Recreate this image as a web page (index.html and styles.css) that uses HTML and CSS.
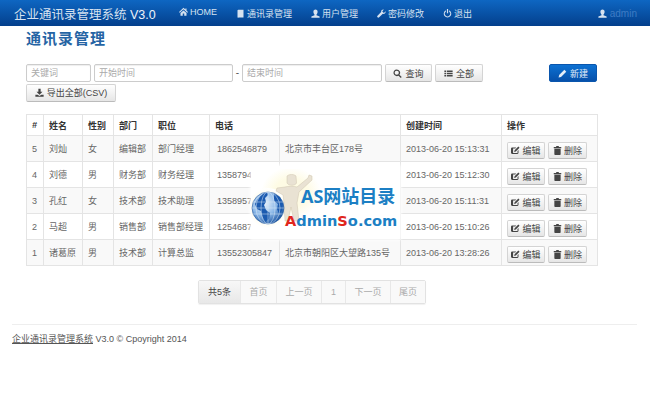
FILE: index.html
```html
<!DOCTYPE html>
<html lang="zh-CN">
<head>
    <meta charset="UTF-8">
    <meta name="viewport" content="width=device-width, initial-scale=1.0">
    <title>企业通讯录管理系统 V3.0</title>
    <link rel="stylesheet" href="styles.css">
</head>
<body>
    <svg class="defs" width="0" height="0">
        <symbol id="i-home" viewBox="0 0 12 12"><path d="M6 1 0 6.500l1 1L6 3l5 4.500 1-1-2-1.900V2H8.500v1.200zM2 8l4-3.500L10 8v3.500H7V8.500H5v3H2z"/></symbol>
        <symbol id="i-book" viewBox="0 0 12 12"><path d="M2 1.500 3 1h7v9.500H3.500l-.5.500h7v.500H2.500L2 11z"/></symbol>
        <symbol id="i-user" viewBox="0 0 12 12"><path d="M6 .5c1.800 0 2.800 1.300 2.800 3S7.800 7 7.300 7.300v1L11.500 10v1.500H.5V10l4.200-1.700v-1C4.200 7 3.200 5.200 3.200 3.500s1-3 2.800-3z"/></symbol>
        <symbol id="i-wrench" viewBox="0 0 12 12"><path d="M11.500 3 9.200 5.200 7 3.300 9.100.8C7.500.2 5.200 1.500 5.500 4L.7 9a1.500 1.500 0 0 0 2.200 2.100L7.800 6.400C10 7 12 5 11.500 3z"/></symbol>
        <symbol id="i-off" viewBox="0 0 12 12"><path d="M3.800 1.800v1.700a3.500 3.500 0 1 0 4.400 0V1.800a5 5 0 1 1-4.400 0zM5.200 0h1.600v5.500H5.200z"/></symbol>
        <symbol id="i-search" viewBox="0 0 12 12"><path fill-rule="evenodd" d="M5 .5a4.500 4.500 0 0 1 3.600 7.200l3 3-1.200 1.200-3-3A4.500 4.500 0 1 1 5 .5zm0 1.700a2.800 2.800 0 1 0 0 5.600 2.800 2.800 0 0 0 0-5.600z"/></symbol>
        <symbol id="i-list" viewBox="0 0 12 12"><path d="M.5 2h2.500v2H.5zm3.500 0h7.500v2H4zM.5 5h2.500v2H.5zM4 5h7.500v2H4zM.5 8h2.500v2H.5zM4 8h7.500v2H4z"/></symbol>
        <symbol id="i-pencil" viewBox="0 0 12 12"><path d="M8.500 1 11 3.500 4 10.500 .8 11.300 1.500 8z"/></symbol>
        <symbol id="i-export" viewBox="0 0 12 12"><path d="M4.500 1h3v4H10L6 9 2 5h2.500zM.5 9h3L6 10.500 8.500 9h3v2.500H.5z"/></symbol>
        <symbol id="i-edit" viewBox="0 0 12 12"><path d="M1.500 2H7L5.700 3.300H2.800v5.900h5.900V6.500L10 5.200V9a1.500 1.500 0 0 1-1.500 1.500h-7A1.500 1.500 0 0 1 0 9V3.500A1.500 1.500 0 0 1 1.500 2zM9.800.8l1.600 1.600-5 5-2.200.6.600-2.200z"/></symbol>
        <symbol id="i-trash" viewBox="0 0 12 12"><path d="M4.500 0h3l.5 1.200h3V3H1V1.200h3zM1.800 3.800h8.400V11a1 1 0 0 1-1 1H2.800a1 1 0 0 1-1-1z"/></symbol>
    </svg>

    <header class="navbar">
        <span class="brand">企业通讯录管理系统 <b>V3.0</b></span>
        <nav class="nav">
            <a href="#"><svg class="icon"><use href="#i-home"/></svg>HOME</a>
            <a href="#"><svg class="icon"><use href="#i-book"/></svg>通讯录管理</a>
            <a href="#"><svg class="icon"><use href="#i-user"/></svg>用户管理</a>
            <a href="#"><svg class="icon"><use href="#i-wrench"/></svg>密码修改</a>
            <a href="#"><svg class="icon"><use href="#i-off"/></svg>退出</a>
        </nav>
        <span class="account"><svg class="icon"><use href="#i-user"/></svg><a href="#">admin</a></span>
    </header>

    <main class="content">
        <h1 class="page-title">通讯录管理</h1>

        <form class="search">
            <input type="text" class="field field-key" placeholder="关键词">
            <input type="text" class="field field-date" placeholder="开始时间">
            <span class="dash">-</span>
            <input type="text" class="field field-date" placeholder="结束时间">
            <button type="button" class="btn btn-query"><svg class="icon"><use href="#i-search"/></svg>查询</button>
            <button type="button" class="btn btn-all"><svg class="icon"><use href="#i-list"/></svg>全部</button>
            <button type="button" class="btn btn-primary"><svg class="icon"><use href="#i-pencil"/></svg>新建</button>
            <button type="button" class="btn btn-export"><svg class="icon"><use href="#i-export"/></svg>导出全部(CSV)</button>
        </form>

        <table class="contacts">
            <colgroup>
                <col class="c-id"><col class="c-name"><col class="c-sex"><col class="c-dept"><col class="c-job">
                <col class="c-tel"><col class="c-addr"><col class="c-time"><col class="c-ops">
            </colgroup>
            <thead>
                <tr><th class="num">#</th><th>姓名</th><th>性别</th><th>部门</th><th>职位</th><th>电话</th><th></th><th>创建时间</th><th>操作</th></tr>
            </thead>
            <tbody>
                <tr>
                    <td>5</td><td>刘灿</td><td>女</td><td>编辑部</td><td>部门经理</td><td class="tel">1862546879</td><td>北京市丰台区178号</td><td>2013-06-20 15:13:31</td>
                    <td class="ops"><button type="button" class="btn btn-mini"><svg class="icon"><use href="#i-edit"/></svg>编辑</button><button type="button" class="btn btn-mini"><svg class="icon"><use href="#i-trash"/></svg>删除</button></td>
                </tr>
                <tr>
                    <td>4</td><td>刘德</td><td>男</td><td>财务部</td><td>财务经理</td><td class="tel">13587945</td><td></td><td>2013-06-20 15:12:30</td>
                    <td class="ops"><button type="button" class="btn btn-mini"><svg class="icon"><use href="#i-edit"/></svg>编辑</button><button type="button" class="btn btn-mini"><svg class="icon"><use href="#i-trash"/></svg>删除</button></td>
                </tr>
                <tr>
                    <td>3</td><td>孔红</td><td>女</td><td>技术部</td><td>技术助理</td><td class="tel">13589576</td><td></td><td>2013-06-20 15:11:31</td>
                    <td class="ops"><button type="button" class="btn btn-mini"><svg class="icon"><use href="#i-edit"/></svg>编辑</button><button type="button" class="btn btn-mini"><svg class="icon"><use href="#i-trash"/></svg>删除</button></td>
                </tr>
                <tr>
                    <td>2</td><td>马超</td><td>男</td><td>销售部</td><td>销售部经理</td><td class="tel">12546873</td><td></td><td>2013-06-20 15:10:26</td>
                    <td class="ops"><button type="button" class="btn btn-mini"><svg class="icon"><use href="#i-edit"/></svg>编辑</button><button type="button" class="btn btn-mini"><svg class="icon"><use href="#i-trash"/></svg>删除</button></td>
                </tr>
                <tr>
                    <td>1</td><td>诸葛原</td><td>男</td><td>技术部</td><td>计算总监</td><td class="tel">13552305847</td><td>北京市朝阳区大望路135号</td><td>2013-06-20 13:28:26</td>
                    <td class="ops"><button type="button" class="btn btn-mini"><svg class="icon"><use href="#i-edit"/></svg>编辑</button><button type="button" class="btn btn-mini"><svg class="icon"><use href="#i-trash"/></svg>删除</button></td>
                </tr>
            </tbody>
        </table>

        <div class="pager">
            <span class="total">共5条</span>
            <a href="#" class="p-first">首页</a>
            <a href="#" class="p-prev">上一页</a>
            <a href="#" class="p-cur">1</a>
            <a href="#" class="p-next">下一页</a>
            <a href="#" class="p-last">尾页</a>
        </div>
    </main>

    <footer class="footer">
        <span><a href="#">企业通讯录管理系统</a> V3.0 © Cpoyright 2014</span>
    </footer>

    <!-- site stamp that sits over the table -->
    <div class="stamp">
        <svg class="stamp-art" width="90" height="70" viewBox="0 0 90 70">
            <defs>
                <radialGradient id="ocean" cx="38%" cy="35%" r="70%">
                    <stop offset="0" stop-color="#eef5fc"/>
                    <stop offset=".55" stop-color="#8db9e8"/>
                    <stop offset="1" stop-color="#15509f"/>
                </radialGradient>
                <radialGradient id="halo">
                    <stop offset=".55" stop-color="#fefbe4"/>
                    <stop offset="1" stop-color="#fff"/>
                </radialGradient>
            </defs>
            <ellipse cx="40" cy="24" rx="30" ry="26" fill="url(#halo)"/>
            <circle cx="17" cy="39" r="20" fill="url(#halo)"/>
            <!-- the little man -->
            <g fill="#e9e2d3" stroke="#cfc5ae" stroke-width=".5">
                <path d="M36 7c2-2 7-2 9 0l.5 7c-1 3-8 3-9.500 0z"/>
                <path d="M34 18c3-1 9-1 12 0l11-9 1-3 3 1 0 4-13 12-2 11 2 18h-5l-3-14-3 14h-3l-1-18-1-8-7-4 1-3z"/>
            </g>
            <!-- globe -->
            <circle cx="17" cy="39" r="16" fill="url(#ocean)" stroke="#2a5d9f" stroke-width=".6"/>
            <g fill="#1b5bb0">
                <path d="M4 35c2-5 7-11 12-12l1 3-3 3 1 4-2 3 2 5 4 3-1 6-4 3-3-6-1-5-4-2z"/>
                <path d="M23 25l6 3 3 7-1 7-3 3-2-5 1-5-4-3z"/>
            </g>
            <g fill="none" stroke="#dbe8f6" stroke-width=".5">
                <ellipse cx="17" cy="39" rx="7" ry="16"/>
                <ellipse cx="17" cy="39" rx="12" ry="16"/>
                <path d="M17 23v32M2 33h30M1 39h32M2 45h30"/>
            </g>
        </svg>
        <div class="stamp-cn">AS网站目录</div>
        <div class="stamp-en"><em>A</em>dmin<em>S</em>o.com</div>
    </div>
</body>
</html>
```

FILE: styles.css
```css
* {
    box-sizing: border-box;
}
html, body {
    height: 100%;
}
body {
    position: relative;
    margin: 0;
    overflow: hidden;
    background: #fff;
    color: #555;
    font-family: "Liberation Sans", "Noto Sans CJK SC", sans-serif;
    font-size: 9px;
}
a {
    color: inherit;
    text-decoration: none;
}
.defs {
    position: absolute;
}
.icon {
    width: 9px;
    height: 9px;
    margin-right: 3px;
    fill: currentColor;
    vertical-align: -1px;
}

/* top bar */
.navbar {
    display: flex;
    align-items: center;
    height: 26px;
    padding-left: 14px;
    background: linear-gradient(#0e66c2, #033f8c);
    color: #d6e2f0;
}
.brand {
    width: 165px;
    font-size: 12.500px;
    white-space: nowrap;
}
.brand b {
    color: #eef3f9;
    font-weight: normal;
}
.nav {
    display: flex;
}
.nav a {
    margin-right: 19px;
    white-space: nowrap;
}
.nav .icon {
    margin-right: 2px;
}
.account {
    margin-left: auto;
    margin-right: 13px;
    font-size: 10px;
    white-space: nowrap;
}
.account a {
    color: #3f7cc4;
}

/* page body */
.content {
    padding: 0 53px 0 26px;
}
.page-title {
    margin: 3px 0 17px;
    color: #2564a4;
    font-family: "Noto Sans CJK SC", sans-serif;
    font-size: 15px;
    font-weight: 700;
    line-height: 18px;
    letter-spacing: 1px;
}
.search {
    display: flex;
    flex-wrap: wrap;
    align-items: flex-start;
    row-gap: 1px;
    height: 38px;
}
.field {
    height: 18px;
    margin: 0;
    padding: 0 4px;
    border: 1px solid #ccc;
    border-radius: 2px;
    box-shadow: inset 0 1px 1px rgba(0, 0, 0, .07);
    font: inherit;
}
.field::placeholder {
    color: #aaa;
}
.field-key {
    width: 65px;
    margin-right: 3px;
}
.field-date {
    width: 139px;
}
.dash {
    width: 9px;
    font-size: 10px;
    line-height: 18px;
    text-align: center;
}
.search .field-date:last-of-type {
    width: 140px;
}
.btn {
    height: 18px;
    padding: 0;
    border: 1px solid #d4d4d4;
    border-bottom-color: #bbb;
    border-radius: 2px;
    background: linear-gradient(#fff, #e6e6e6);
    color: #444;
    font: inherit;
    white-space: nowrap;
}
.btn-query {
    width: 47px;
    margin-left: 3px;
}
.btn-all {
    width: 48px;
    margin-left: 3px;
}
.btn-primary {
    width: 48px;
    margin-left: 66px;
    border-color: #0a56ad;
    background: linear-gradient(#0d71d2, #0650aa);
    color: #e6eef8;
}
.btn-export {
    width: 90px;
}

/* contacts table */
.contacts {
    width: 571px;
    margin-top: 12px;
    border: 1px solid #ddd;
    border-collapse: collapse;
    table-layout: fixed;
}
.c-id { width: 17px; }
.c-name { width: 39px; }
.c-sex { width: 31px; }
.c-dept { width: 39px; }
.c-job { width: 57px; }
.c-tel { width: 70px; }
.c-addr { width: 121px; }
.c-time { width: 101px; }
.c-ops { width: 96px; }
.contacts th,
.contacts td {
    padding: 0 0 0 5px;
    border: 1px solid #e4e4e4;
    text-align: left;
    white-space: nowrap;
    overflow: hidden;
}
.contacts th {
    height: 21px;
    color: #333;
    font-weight: 700;
}
.contacts th.num {
    font-style: italic;
}
.contacts td {
    height: 26px;
    color: #666;
}
.contacts td.tel {
    padding-left: 7px;
}
.contacts tbody tr:nth-child(odd) {
    background: #f9f9f9;
}
.contacts td.ops {
    padding: 3px 0 0 5px;
}
.btn-mini {
    width: 38px;
    height: 17px;
    margin-right: 3px;
}
.btn-mini + .btn-mini {
    width: 39px;
}
.btn-mini .icon {
    margin-right: 2px;
}

/* pagination */
.pager {
    display: flex;
    width: 228px;
    height: 24px;
    margin: 14px 0 0 172px;
    border: 1px solid #e2e2e2;
    border-radius: 2px;
    box-shadow: 0 1px 1px rgba(0, 0, 0, .06);
    line-height: 22px;
    text-align: center;
}
.pager a,
.pager span {
    border-left: 1px solid #e8e8e8;
    color: #aaa;
    background: #f9f9f9;
}
.pager .total {
    width: 41px;
    border-left: 0;
    background: linear-gradient(#f7f7f7, #e8e8e8);
    color: #444;
}
.p-first { width: 36px; }
.p-prev { width: 45px; }
.p-cur { width: 24px; }
.p-next { width: 45px; }
.p-last { flex: 1; }

/* footer */
.footer {
    margin: 20px 13px 0 12px;
    padding-top: 8px;
    border-top: 1px solid #eee;
    color: #555;
    line-height: 12px;
}
.footer a {
    text-decoration: underline;
}

/* site stamp */
.stamp {
    position: absolute;
    left: 251px;
    top: 166px;
    width: 149px;
    height: 73px;
    background: #fff;
    box-shadow: 0 0 3px 1px #fff;
}
.stamp-art {
    position: absolute;
    left: 0;
    top: 3px;
}
.stamp-cn,
.stamp-en {
    position: absolute;
    font-weight: 700;
    color: #1c7fc4;
    white-space: nowrap;
}
.stamp-cn {
    left: 50px;
    top: 19px;
    font-family: "Noto Sans", "Noto Sans CJK SC", sans-serif;
    font-size: 18px;
    line-height: 22px;
}
.stamp-en {
    left: 34px;
    top: 45px;
    font-family: "DejaVu Sans", sans-serif;
    font-size: 14.600px;
    line-height: 20px;
}
.stamp-en em {
    color: #e0261c;
    font-style: normal;
}
```
